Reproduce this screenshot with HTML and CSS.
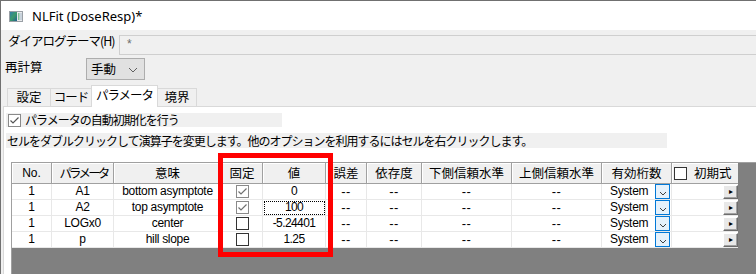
FILE: index.html
```html
<!DOCTYPE html>
<html lang="ja">
<head>
<meta charset="utf-8">
<link rel="stylesheet" href="styles.css">
</head>
<body>
<div class="window">
  <div class="titlebar">
    <svg class="app-icon" width="14" height="11" viewBox="0 0 14 11">
      <defs>
        <linearGradient id="g1" x1="0" y1="0" x2="1" y2="1">
          <stop offset="0" stop-color="#2f7fa8"/>
          <stop offset="0.5" stop-color="#3c9a6a"/>
          <stop offset="1" stop-color="#1f5f8f"/>
        </linearGradient>
      </defs>
      <rect x="0.5" y="0.5" width="13" height="10" fill="#e8eaec" stroke="#9aa0a6"/>
      <rect x="1" y="1" width="7" height="9" fill="url(#g1)"/>
      <rect x="9" y="2" width="1.5" height="7" fill="#7fbf9a"/>
      <rect x="11" y="2" width="2" height="7" fill="#c9d3dc"/>
    </svg>
    <span class="title-text">NLFit (DoseResp)*</span>
  </div>
  <div class="dlg">
    <div class="theme-row">
      <span class="theme-label">ダイアログテーマ(H)</span>
      <div class="theme-input">*</div>
    </div>
    <div class="recalc-row">
      <span class="recalc-label">再計算</span>
      <div class="select">
        <span>手動</span>
        <svg width="10" height="6" viewBox="0 0 10 6"><path d="M1 1 L5 5 L9 1" fill="none" stroke="#606060" stroke-width="1"/></svg>
      </div>
    </div>
    <div class="tabs">
      <div class="tab t1">設定</div>
      <div class="tab t2">コード</div>
      <div class="tab active t3">パラメータ</div>
      <div class="tab t4">境界</div>
    </div>
    <div class="panel">
      <div class="auto-row">
        <span class="cb checked-light">
          <svg width="11" height="11" viewBox="0 0 11 11"><path d="M1.5 5.5 L4 8 L9.5 2.5" fill="none" stroke="#555" stroke-width="1.2"/></svg>
        </span>
        <span class="jp-tight">パラメータの自動初期化を行う</span>
      </div>
      <div class="info-row"><span class="jp-tight">セルをダブルクリックして演算子を変更します。他のオプションを利用するにはセルを右クリックします。</span></div>

      <div class="grid">
        <div class="gtable">
          <div class="h">No.</div>
          <div class="h"><span class="narrow">パラメータ</span></div>
          <div class="h">意味</div>
          <div class="h">固定</div>
          <div class="h">値</div>
          <div class="h">誤差</div>
          <div class="h">依存度</div>
          <div class="h">下側信頼水準</div>
          <div class="h">上側信頼水準</div>
          <div class="h">有効桁数</div>
          <div class="h h-init"><span class="cb dark"></span><span>初期式</span></div>

          <div class="c">1</div><div class="c">A1</div><div class="c">bottom asymptote</div>
          <div class="c"><span class="cb checked-light"><svg width="11" height="11" viewBox="0 0 11 11"><path d="M1.5 5.5 L4 8 L9.5 2.5" fill="none" stroke="#707070" stroke-width="1.2"/></svg></span></div>
          <div class="c num">0</div><div class="c dash">--</div><div class="c dash">--</div><div class="c dash">--</div><div class="c dash">--</div>
          <div class="c sig"><span>System</span><span class="dd"><svg width="8" height="5" viewBox="0 0 8 5"><path d="M1 1 L4 4 L7 1" fill="none" stroke="#404040" stroke-width="1"/></svg></span></div>
          <div class="c init"><span class="arrow-btn">&#9656;</span></div>

          <div class="c">1</div><div class="c">A2</div><div class="c">top asymptote</div>
          <div class="c"><span class="cb checked-light"><svg width="11" height="11" viewBox="0 0 11 11"><path d="M1.5 5.5 L4 8 L9.5 2.5" fill="none" stroke="#707070" stroke-width="1.2"/></svg></span></div>
          <div class="c num"><span class="focus">100</span></div><div class="c dash">--</div><div class="c dash">--</div><div class="c dash">--</div><div class="c dash">--</div>
          <div class="c sig"><span>System</span><span class="dd"><svg width="8" height="5" viewBox="0 0 8 5"><path d="M1 1 L4 4 L7 1" fill="none" stroke="#404040" stroke-width="1"/></svg></span></div>
          <div class="c init"><span class="arrow-btn">&#9656;</span></div>

          <div class="c">1</div><div class="c">LOGx0</div><div class="c">center</div>
          <div class="c"><span class="cb dark"></span></div>
          <div class="c num">-5.24401</div><div class="c dash">--</div><div class="c dash">--</div><div class="c dash">--</div><div class="c dash">--</div>
          <div class="c sig"><span>System</span><span class="dd"><svg width="8" height="5" viewBox="0 0 8 5"><path d="M1 1 L4 4 L7 1" fill="none" stroke="#404040" stroke-width="1"/></svg></span></div>
          <div class="c init"><span class="arrow-btn">&#9656;</span></div>

          <div class="c">1</div><div class="c">p</div><div class="c">hill slope</div>
          <div class="c"><span class="cb dark"></span></div>
          <div class="c num">1.25</div><div class="c dash">--</div><div class="c dash">--</div><div class="c dash">--</div><div class="c dash">--</div>
          <div class="c sig"><span>System</span><span class="dd"><svg width="8" height="5" viewBox="0 0 8 5"><path d="M1 1 L4 4 L7 1" fill="none" stroke="#404040" stroke-width="1"/></svg></span></div>
          <div class="c init"><span class="arrow-btn">&#9656;</span></div>
        </div>
      </div>

      <div class="highlight"></div>
    </div>
  </div>
</div>
</body>
</html>
```

FILE: styles.css
```css
* { box-sizing: border-box; }
html, body { margin: 0; padding: 0; }
body {
  width: 756px;
  height: 274px;
  overflow: hidden;
  background: #f0f0f0;
  font-family: "Noto Sans CJK JP", "Noto Sans", sans-serif;
  font-size: 12px;
  color: #000;
}
.window {
  height: 274px;
  display: flex;
  flex-direction: column;
  border-top: 1px solid #707070;
  border-left: 1px solid #707070;
}
.titlebar {
  height: 29px;
  flex: none;
  background: #fff;
  display: flex;
  align-items: center;
  padding-left: 8px;
  gap: 9px;
}
.app-icon { display: block; margin-top: 1px; }
.title-text {
  font-family: "Noto Sans", "Open Sans", sans-serif;
  font-size: 13px;
  color: #000;
}
.dlg {
  flex: 1;
  display: flex;
  flex-direction: column;
  min-height: 0;
}
.theme-row {
  display: flex;
  height: 20px;
  margin-top: 5px;
  flex: none;
  align-items: stretch;
}
.theme-label {
  width: 118px;
  padding-left: 7px;
  line-height: 14px;
  margin-top: -1px;
  letter-spacing: -1px;
  flex: none;
  font-size: 12.5px;
}
.theme-input {
  flex: 1;
  border: 1px solid #cfcfcf;
  border-right: none;
  background: #f0f0f0;
  color: #6d6d6d;
  padding-left: 7px;
  line-height: 17px;
  font-family: "Liberation Sans", sans-serif;
  font-size: 12px;
}
.recalc-row {
  display: flex;
  height: 22px;
  margin-top: 3px;
  flex: none;
  align-items: flex-start;
}
.recalc-label {
  width: 85px;
  padding-left: 4px;
  line-height: 16px;
  margin-top: 1px;
  flex: none;
  font-size: 12.5px;
}
.select {
  width: 59px;
  height: 22px;
  background: #e1e1e1;
  border: 1px solid #adadad;
  display: flex;
  align-items: center;
  justify-content: space-between;
  padding: 0 6px 0 4px;
  line-height: 16px;
  font-size: 12.5px;
}
.select svg { display: block; margin-top: 1px; }
.tabs {
  display: flex;
  align-items: flex-end;
  height: 21px;
  margin-top: 5px;
  padding-left: 6px;
  flex: none;
  position: relative;
  z-index: 1;
}
.tab {
  height: 18px;
  border: 1px solid #d9d9d9;
  border-bottom: none;
  border-right: none;
  background: #f0f0f0;
  line-height: 16px;
  text-align: center;
  flex: none;
  font-size: 12.5px;
}
.t1 { width: 43px; }
.t2 { width: 41px; letter-spacing: -1px; }
.t3 { width: 67px; letter-spacing: -1px; }
.t4 { width: 39px; border-right: 1px solid #d9d9d9; }
.tab.active {
  height: 22px;
  margin-bottom: -1px;
  background: #fff;
  border-right: 1px solid #d9d9d9;
  line-height: 18px;
}
.tab.active + .tab { border-left: none; }
.panel {
  flex: 1;
  margin-left: 2px;
  background: #fff;
  border-top: 1px solid #d9d9d9;
  border-left: 1px solid #d9d9d9;
  display: flex;
  flex-direction: column;
  position: relative;
  min-height: 0;
}
.jp-tight { letter-spacing: -1px; }
.auto-row {
  margin-top: 6px;
  height: 14px;
  width: 276px;
  margin-left: 2px;
  background: #f0f0f0;
  display: flex;
  align-items: center;
  gap: 4px;
  padding-left: 2px;
  line-height: 14px;
  flex: none;
}
.info-row {
  margin-top: 6px;
  height: 15px;
  width: 661px;
  margin-left: 2px;
  background: #f0f0f0;
  line-height: 15px;
  padding-left: 1px;
  flex: none;
  white-space: nowrap;
}
.cb {
  width: 13px;
  height: 13px;
  border: 1px solid #333;
  background: #fff;
  display: inline-flex;
  align-items: center;
  justify-content: center;
  flex: none;
}
.cb.checked-light { border-color: #8a8a8a; }
.cb svg { display: block; }
.grid {
  flex: 1;
  margin-top: 14px;
  margin-left: 7px;
  background: #808080;
  border-top: 1px solid #a0a0a0;
  border-left: 1px solid #a0a0a0;
  min-height: 0;
}
.gtable {
  display: grid;
  grid-template-columns: 40px 62px 108px 41px 63px 41px 55px 90px 90px 70px 66px;
  grid-template-rows: 21px repeat(4, 16px);
  width: 726px;
  font-family: "Liberation Sans", "Noto Sans CJK JP", sans-serif;
  font-size: 12px;
  letter-spacing: -0.3px;
}
.h {
  background: #f0f0f0;
  border-right: 1px solid #a0a0a0;
  border-bottom: 1px solid #a0a0a0;
  box-shadow: inset 1px 1px 0 #fff;
  display: flex;
  align-items: center;
  justify-content: center;
  font-family: "Noto Sans CJK JP", sans-serif;
  font-size: 12.5px;
  letter-spacing: 0;
  line-height: 14px;
}
.h:first-child { font-family: "Liberation Sans", sans-serif; font-size: 12px; }
.narrow { letter-spacing: -2.8px; margin-right: -2px; }
.h-init { justify-content: flex-start; padding-left: 2px; gap: 7px; border-right: none; }
.c {
  background: #fff;
  border-right: 1px solid #e8e8e8;
  border-bottom: 1px solid #e8e8e8;
  display: flex;
  align-items: center;
  justify-content: center;
  line-height: 13px;
  white-space: nowrap;
}
.c .cb { margin-left: 1px; }
.num { letter-spacing: -0.6px; }
.dash { letter-spacing: 0.5px; font-size: 13px; }
.focus {
  display: flex;
  align-items: center;
  justify-content: center;
  width: 61px;
  height: 14px;
  outline: 1px dotted #000;
  outline-offset: -1px;
}
.sig { justify-content: space-between; padding-left: 8px; padding-right: 1px; }
.dd {
  width: 15px;
  height: 15px;
  border: 1px solid #0078d7;
  background: #e5f1fb;
  display: flex;
  align-items: flex-end;
  justify-content: center;
  padding-bottom: 2px;
}
.dd svg { display: block; }
.init { justify-content: flex-end; padding-right: 0; border-right: none; }
.arrow-btn {
  width: 15px;
  height: 14px;
  background: #e8e8e8;
  border-top: 1px solid #fff;
  border-left: 1px solid #fff;
  border-right: 1px solid #6d6d6d;
  border-bottom: 1px solid #6d6d6d;
  box-shadow: inset -1px -1px 0 #a0a0a0;
  font-size: 8px;
  line-height: 12px;
  text-align: center;
  color: #000;
  letter-spacing: 0;
}
.highlight {
  position: absolute;
  left: 214px;
  top: 46px;
  width: 115px;
  height: 104px;
  border: 5px solid #ff0000;
  pointer-events: none;
}
```
